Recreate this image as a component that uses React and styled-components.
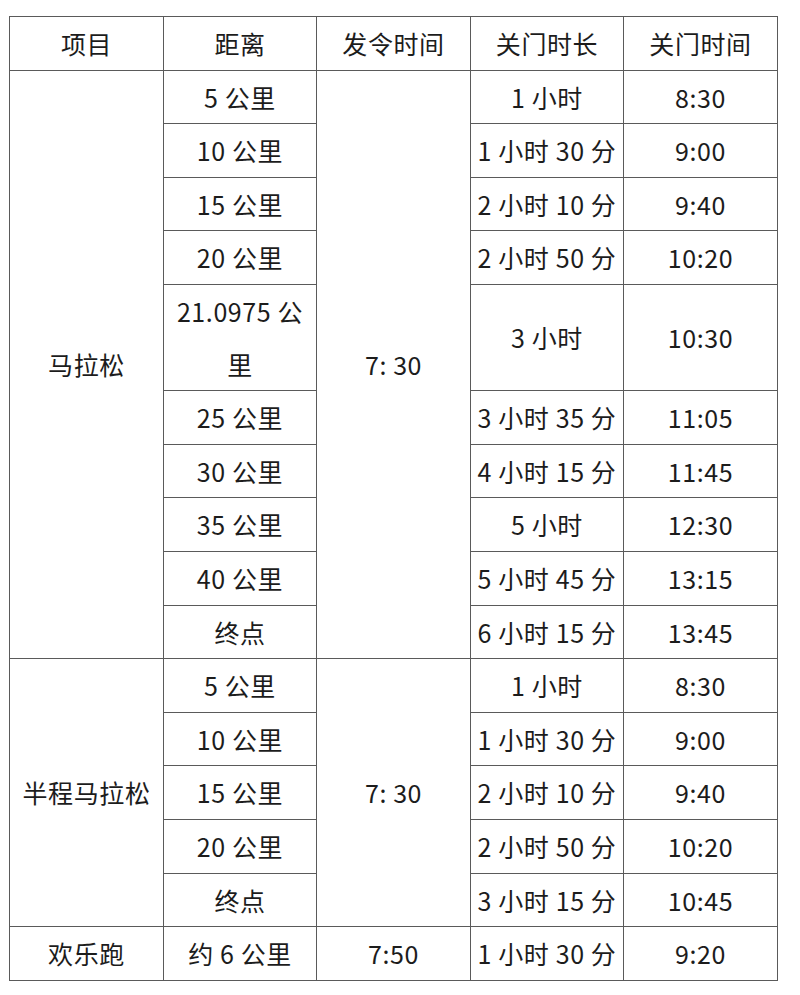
import React from 'react';
import styled, { createGlobalStyle } from 'styled-components';

const GlobalStyle = createGlobalStyle`
  html, body {
    margin: 0;
    padding: 0;
    background: #ffffff;
  }
  body {
    font-family: "Noto Sans CJK SC", "Noto Sans", sans-serif;
    color: #1c1c1c;
  }
`;

const marathon = [
  ['5 公里', '1 小时', '8:30'],
  ['10 公里', '1 小时 30 分', '9:00'],
  ['15 公里', '2 小时 10 分', '9:40'],
  ['20 公里', '2 小时 50 分', '10:20'],
  ['21.0975 公里', '3 小时', '10:30'],
  ['25 公里', '3 小时 35 分', '11:05'],
  ['30 公里', '4 小时 15 分', '11:45'],
  ['35 公里', '5 小时', '12:30'],
  ['40 公里', '5 小时 45 分', '13:15'],
  ['终点', '6 小时 15 分', '13:45'],
];

const half = [
  ['5 公里', '1 小时', '8:30'],
  ['10 公里', '1 小时 30 分', '9:00'],
  ['15 公里', '2 小时 10 分', '9:40'],
  ['20 公里', '2 小时 50 分', '10:20'],
  ['终点', '3 小时 15 分', '10:45'],
];

export default function App() {
  const renderGroup = (name, rows, start) =>
    rows.map((r, i) => (
      <tr key={name + i}>
        {i === 0 && <Cell rowSpan={rows.length}>{name}</Cell>}
        <Cell>{r[0]}</Cell>
        {i === 0 && <Cell rowSpan={rows.length}>{start}</Cell>}
        <Cell>{r[1]}</Cell>
        <Cell>{r[2]}</Cell>
      </tr>
    ));

  return (
    <React.Fragment>
      <GlobalStyle />
      <Page>
        <Table>
          <colgroup>
            <col style={{ width: 154 }} />
            <col style={{ width: 153 }} />
            <col style={{ width: 154 }} />
            <col style={{ width: 153 }} />
            <col style={{ width: 154 }} />
          </colgroup>
          <thead>
            <tr>
              <Cell as="th">项目</Cell>
              <Cell as="th">距离</Cell>
              <Cell as="th">发令时间</Cell>
              <Cell as="th">关门时长</Cell>
              <Cell as="th">关门时间</Cell>
            </tr>
          </thead>
          <tbody>
            {renderGroup('马拉松', marathon, '7: 30')}
            {renderGroup('半程马拉松', half, '7: 30')}
            <tr>
              <Cell>欢乐跑</Cell>
              <Cell>约 6 公里</Cell>
              <Cell>7:50</Cell>
              <Cell>1 小时 30 分</Cell>
              <Cell>9:20</Cell>
            </tr>
          </tbody>
        </Table>
      </Page>
    </React.Fragment>
  );
}

const Page = styled.div`
  padding: 16px 0 0 9px;
`;

const Table = styled.table`
  border-collapse: collapse;
  table-layout: fixed;
  width: 769px;
`;

const Cell = styled.td`
  border: 1px solid #5a5a5a;
  padding: 0 3px;
  text-align: center;
  vertical-align: middle;
  font-size: 25px;
  font-weight: 400;
  line-height: 52.6px;
  letter-spacing: 0.6px;
  white-space: normal;
  overflow: hidden;
`;
